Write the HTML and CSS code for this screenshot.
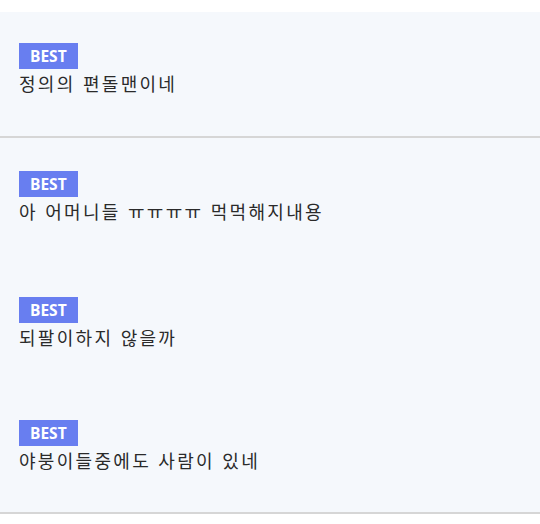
FILE: index.html
```html
<!DOCTYPE html>
<html lang="ko">
<head>
    <meta charset="UTF-8">
    <meta name="viewport" content="width=device-width, initial-scale=1.0">
    <title>BEST</title>
    <link rel="stylesheet" href="styles.css">
</head>
<body>

<!-- 베스트 댓글 -->
<div class="best-list">
    <div class="best-item first">
        <span class="badge">BEST</span>
        <p class="comment">정의의 편돌맨이네</p>
    </div>
    <div class="best-item second">
        <span class="badge">BEST</span>
        <p class="comment">아 어머니들 ㅠㅠㅠㅠ 먹먹해지내용</p>
    </div>
    <div class="best-item">
        <span class="badge">BEST</span>
        <p class="comment">되팔이하지 않을까</p>
    </div>
    <div class="best-item last">
        <span class="badge">BEST</span>
        <p class="comment">야붕이들중에도 사람이 있네</p>
    </div>
</div>

</body>
</html>
```

FILE: styles.css
```css
* {
    margin: 0;
    padding: 0;
    box-sizing: border-box;
}

body, html {
    width: 100%;
    height: 100%;
    background-color: #ffffff;
    font-family: "Noto Sans CJK KR", "Noto Sans", sans-serif;
}

.best-list {
    margin-top: 12px;
    background-color: #f5f8fc;
}

.best-item {
    height: 122px;
    padding: 31px 19px 0;
}

.best-item.first {
    height: 126px;
    border-bottom: 2px solid #d6d6d6;
}

.best-item.second {
    height: 128px;
    padding-top: 33px;
}

.best-item.last {
    height: 126px;
    padding-top: 32px;
    border-bottom: 2px solid #d6d6d6;
}

.badge {
    display: inline-block;
    height: 26px;
    padding: 0 11px;
    background-color: #687ef0;
    color: #ffffff;
    font-family: "Open Sans", sans-serif;
    font-weight: 700;
    font-size: 15.5px;
    line-height: 27px;
}

.comment {
    margin-top: 2px;
    font-size: 18px;
    line-height: 24px;
    letter-spacing: 2.3px;
    color: #2a2a2a;
}
```
